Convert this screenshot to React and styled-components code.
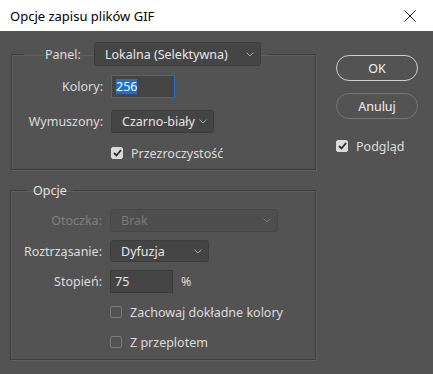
import React from "react";
import styled, { createGlobalStyle } from "styled-components";

const GlobalStyle = createGlobalStyle`
  html, body {
    margin: 0;
    padding: 0;
    background: #535353;
  }
  body {
    font-family: "Noto Sans", "Open Sans", sans-serif;
    font-size: 12px;
  }
`;

const Chevron = () => (
  <svg width="8" height="5" viewBox="0 0 8 5">
    <path d="M0.5 0.5 L4 4 L7.5 0.5" fill="none" stroke="#a8a8a8" strokeWidth="1" />
  </svg>
);

const Check = () => (
  <svg width="9" height="8" viewBox="0 0 9 8">
    <path d="M1 4 L3.5 6.5 L8 1" fill="none" stroke="#2b2b2b" strokeWidth="1.8" />
  </svg>
);

const App = () => {
  return (
    <Window>
      <GlobalStyle />
      <TitleBar>
        <Title>Opcje zapisu plików GIF</Title>
        <svg width="12" height="12" viewBox="0 0 12 12">
          <path d="M0.5 0.5 L11.5 11.5 M11.5 0.5 L0.5 11.5" stroke="#222" strokeWidth="1" />
        </svg>
      </TitleBar>
      <Body>
        <Left>
          <Group>
            <PanelLegend>
              <Label>Panel:</Label>
              <Select $w={167} $h={24}>
                <span>Lokalna (Selektywna)</span>
                <Chevron />
              </Select>
            </PanelLegend>
            <Rows $top={9} $gap={12}>
              <Label>Kolory:</Label>
              <Input $w={64} $focused>
                <Selected>256</Selected>
              </Input>
              <Label>Wymuszony:</Label>
              <Select $w={103} $h={23}>
                <span>Czarno-biały</span>
                <Chevron />
              </Select>
              <span />
              <CheckRow $h={16}>
                <Box $checked>
                  <Check />
                </Box>
                Przezroczystość
              </CheckRow>
            </Rows>
          </Group>
          <Group $second>
            <Legend>Opcje</Legend>
            <Rows $top={10} $gap={8}>
              <Label $disabled>Otoczka:</Label>
              <Select $w={168} $h={23} $disabled>
                <span>Brak</span>
                <Chevron />
              </Select>
              <Label>Roztrząsanie:</Label>
              <Select $w={99} $h={22}>
                <span>Dyfuzja</span>
                <Chevron />
              </Select>
              <Label>Stopień:</Label>
              <InputLine>
                <Input $w={63}>75</Input>
                <span>%</span>
              </InputLine>
              <span />
              <CheckRow $h={22}>
                <Box />
                Zachowaj dokładne kolory
              </CheckRow>
              <span />
              <CheckRow $h={22}>
                <Box />
                Z przeplotem
              </CheckRow>
            </Rows>
          </Group>
        </Left>
        <Right>
          <Button $primary>OK</Button>
          <Button>Anuluj</Button>
          <CheckRow $h={16} $side>
            <Box $checked>
              <Check />
            </Box>
            Podgląd
          </CheckRow>
        </Right>
      </Body>
    </Window>
  );
};

const Window = styled.div`
  width: 433px;
  height: 374px;
  display: flex;
  flex-direction: column;
  background: #535353;
  color: #dcdcdc;
  overflow: hidden;
`;

const TitleBar = styled.div`
  height: 31px;
  background: #ffffff;
  display: flex;
  align-items: center;
  justify-content: space-between;
  padding: 0 17px 0 10px;
  box-sizing: border-box;
`;

const Title = styled.div`
  font-family: "Noto Sans", sans-serif;
  font-size: 13px;
  color: #000;
`;

const Body = styled.div`
  flex: 1;
  display: flex;
  padding: 11px 0 0 11px;
`;

const Left = styled.div`
  width: 305px;
  display: flex;
  flex-direction: column;
`;

const Group = styled.fieldset`
  margin: ${(p) => (p.$second ? "12px 0 0 -1px" : "0")};
  padding: 0 0 ${(p) => (p.$second ? "6px" : "8px")} 0;
  border: 1px solid #3e3e3e;
  box-shadow: inset 1px 1px 0 #5f5f5f, 1px 1px 0 #5f5f5f;
  min-width: 0;
  width: ${(p) => (p.$second ? "306px" : "305px")};
  box-sizing: border-box;
`;

const PanelLegend = styled.legend`
  display: flex;
  align-items: center;
  gap: 13px;
  margin-left: 12px;
  padding: 0 7px 0 21px;
`;

const Legend = styled.legend`
  margin-left: 16px;
  padding: 0 6px;
  font-size: 12.5px;
  line-height: 17px;
  color: #e2e2e2;
`;

const Rows = styled.div`
  display: grid;
  grid-template-columns: 91px auto;
  column-gap: 8px;
  row-gap: ${(p) => p.$gap}px;
  align-items: center;
  justify-items: start;
  margin-top: ${(p) => p.$top}px;
`;

const Label = styled.span`
  justify-self: end;
  font-size: 12.5px;
  color: ${(p) => (p.$disabled ? "#7f7f7f" : "#dcdcdc")};
`;

const Select = styled.div`
  width: ${(p) => p.$w}px;
  height: ${(p) => p.$h}px;
  box-sizing: border-box;
  display: flex;
  align-items: center;
  justify-content: space-between;
  padding: 0 6px 0 10px;
  background: ${(p) => (p.$disabled ? "#4e4e4e" : "#454545")};
  border: 1px solid ${(p) => (p.$disabled ? "#474747" : "#3c3c3c")};
  border-radius: 3px;
  font-size: 12.5px;
  color: ${(p) => (p.$disabled ? "#7a7a7a" : "#e6e6e6")};
  svg {
    opacity: ${(p) => (p.$disabled ? 0.5 : 1)};
  }
`;

const Input = styled.div`
  width: ${(p) => p.$w}px;
  height: 23px;
  box-sizing: border-box;
  display: flex;
  align-items: center;
  padding: 0 4px;
  background: #454545;
  border: 1px solid ${(p) => (p.$focused ? "#1f6fcf" : "#3a3a3a")};
  font-size: 12.5px;
  color: #e6e6e6;
`;

const Selected = styled.span`
  background: #1d6fd1;
  color: #ffffff;
  line-height: 15px;
`;

const InputLine = styled.div`
  display: flex;
  align-items: center;
  gap: 8px;
  font-size: 12.5px;
`;

const CheckRow = styled.label`
  display: flex;
  align-items: center;
  gap: 8px;
  font-size: 12.5px;
  color: #dcdcdc;
  margin-top: ${(p) => (p.$side ? "7px" : "0")};
  height: ${(p) => p.$h}px;
`;

const Box = styled.span`
  width: 12px;
  height: 12px;
  box-sizing: border-box;
  border-radius: 2px;
  display: flex;
  align-items: center;
  justify-content: center;
  background: ${(p) => (p.$checked ? "#dadada" : "transparent")};
  border: 1px solid ${(p) => (p.$checked ? "#dadada" : "#7a7a7a")};
`;

const Right = styled.div`
  display: flex;
  flex-direction: column;
  gap: 12px;
  padding: 13px 0 0 20px;
`;

const Button = styled.button`
  width: 82px;
  height: 26px;
  border-radius: 13px;
  background: transparent;
  border: ${(p) => (p.$primary ? "1.5px solid #cfcfcf" : "1px solid #767676")};
  color: #f0f0f0;
  font-family: "Noto Sans", sans-serif;
  font-size: 12.5px;
  padding: 0;
`;

export default App;
